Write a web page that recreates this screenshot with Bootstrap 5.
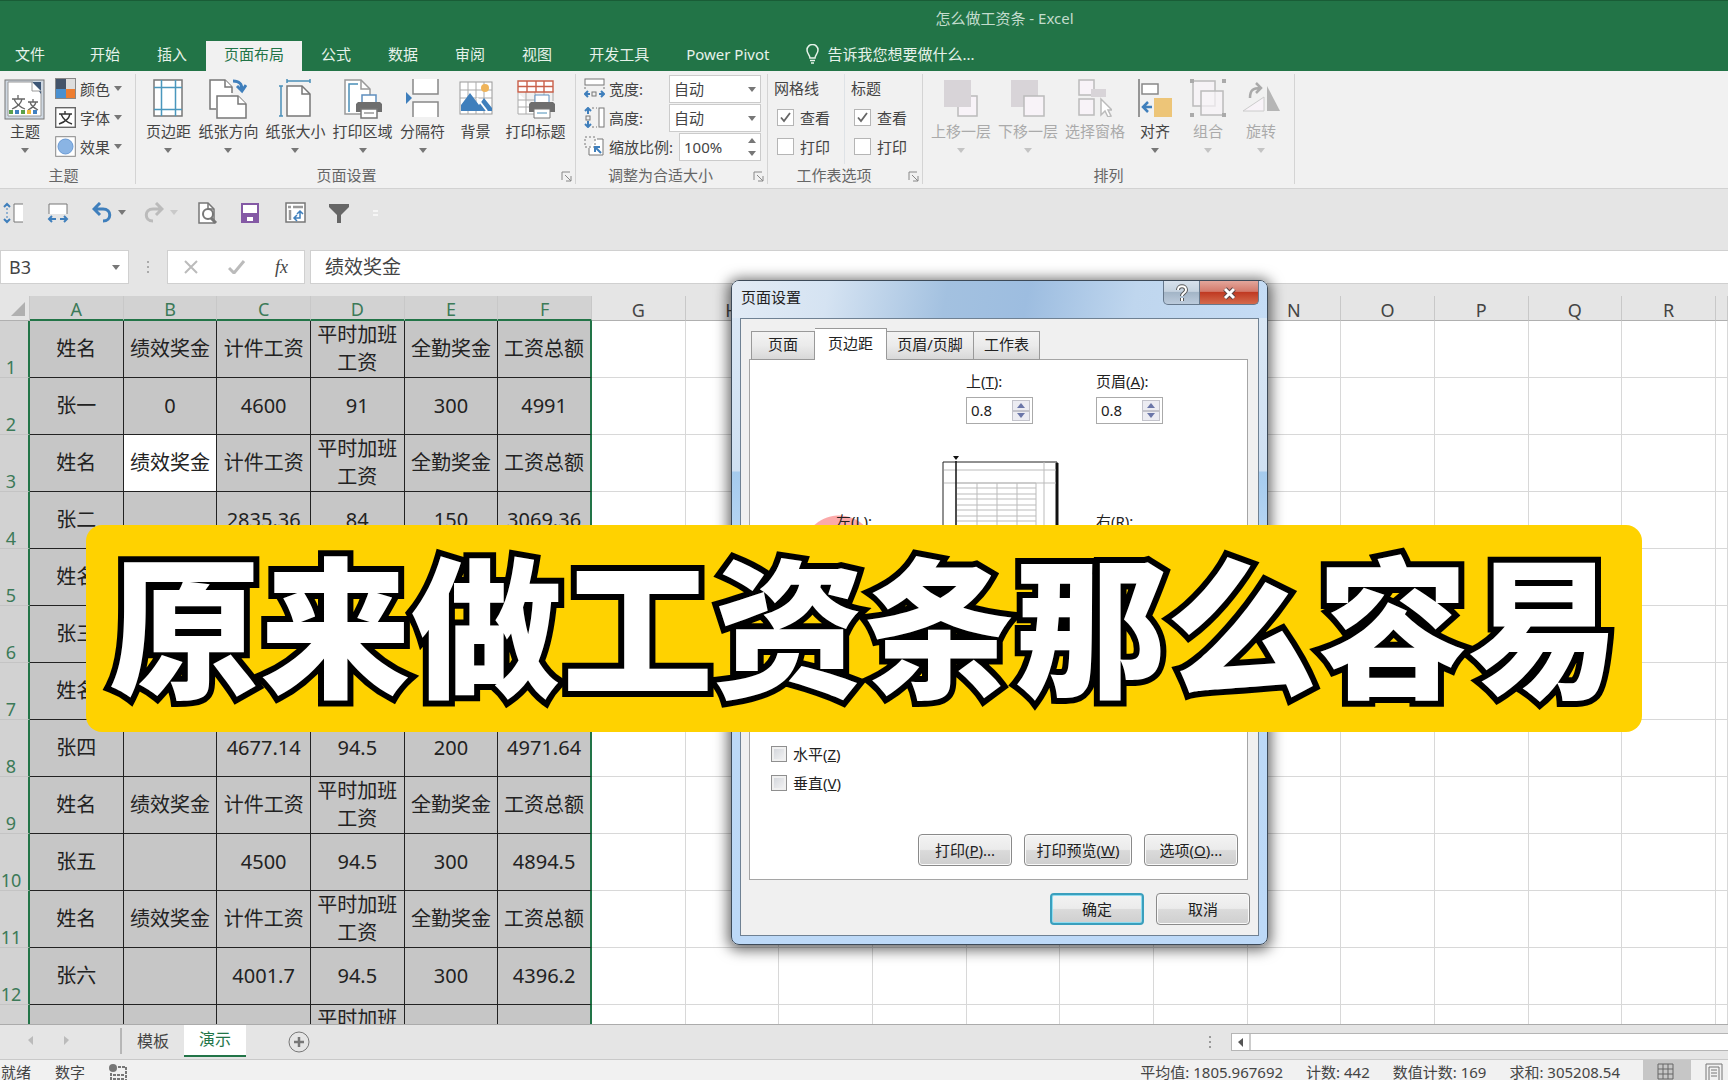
<!DOCTYPE html>
<html lang="zh-CN">
<head>
<meta charset="utf-8">
<meta name="viewport" content="width=device-width, initial-scale=1">
<title>怎么做工资条 - Excel</title>
<link rel="stylesheet" href="https://cdn.jsdelivr.net/npm/bootstrap@5.3.0/dist/css/bootstrap.min.css">
<style>
:root{--xl:#227447;--ui:"Noto Sans","Noto Sans CJK SC",sans-serif}
body{font-family:var(--ui);font-size:15px;line-height:20px;color:#444;background:#e5e5e5;overflow:hidden}
button,input,select{font:inherit;color:inherit}
button{border:0;background:none;padding:0;white-space:nowrap}
svg{display:block;flex:none}
.titlebar{background:var(--xl);color:#c3dccd;height:71px;border-top:1px solid #195c36}
.titletext{height:40px;padding:7px 0 0 281px}
.tabs{gap:1px}
.tabs button{height:30px;padding:0 18px 4px;color:#e6f2ea}
.tabs button.first{padding:0 26px 4px 15px}
.tabs button.on{background:#f1f1f1;color:var(--xl)}
.ribbon{background:#f1f1f1;height:118px;border-bottom:1px solid #d2d2d2}
.group{border-right:1px solid #d4d4d4;margin:3px 0 4px}
.glabel{color:#666;height:20px;text-align:center;line-height:22px}
.glabel svg{margin:7px 2px 0 0}
.big{min-width:46px;height:84px;padding-top:5px}
.big span{margin-top:4px;height:20px}
.big span.tight{margin-top:2px}
.big i,.dd{width:0;height:0;border:4px solid transparent;border-top:5px solid #777;border-bottom:0;flex:none}
.big i{margin-top:7px}
.big.off{color:#aaa}.big.off i{border-top-color:#c4c4c4}
.small-row{height:29px}
.fit select,.fit input{height:28px;border:1px solid #cbcbcb;background:#fff;border-radius:0;padding:0 4px;outline:0;appearance:none;min-width:0;width:100%}
.fit label{flex:1;white-space:nowrap;min-width:0}
.pickwrap{position:relative;width:92px;flex:none}
.pickwrap.narrow{width:82px}
.pickwrap .dd{position:absolute;right:5px;top:12px}
.spin{position:absolute;right:5px;top:5px;height:18px}
.up{width:0;height:0;border:4px solid transparent;border-bottom:5px solid #777;border-top:0}
.tick{appearance:none;width:17px;height:17px;border:1px solid #b5b5b5;background:#fff;margin:0 6px 0 3px;flex:none}
.tick:checked{background:#fff url("data:image/svg+xml,%3Csvg xmlns='http://www.w3.org/2000/svg' viewBox='0 0 15 15'%3E%3Cpath d='M3 7.500l3 3.500 6-8' fill='none' stroke='%23666' stroke-width='1.800'/%3E%3C/svg%3E")}
.optcol{width:77px}
.quick{height:61px;padding:0 2px 14px}
.quick>button+button{margin-left:23px}
.fbar{height:34px}
.fbar .cellbox{background:#fff;border:1px solid #d0d0d0}
.fbar input{border:0;outline:0;background:none;min-width:0;width:100%;font-size:19px;color:#444}
.fbar .namebox input{font-size:18px;padding:0 8px}
.sheet{margin-top:12px;overflow:hidden;background:#fff;min-height:0}
.sheet table{table-layout:fixed;width:100%;border-collapse:separate;border-spacing:0}
.sheet col.rowno{width:30px}.sheet col.std{width:calc((100vw - 42px)/18)}
.sheet thead th{height:24px;background:#e5e5e5;border-right:1px solid #c8c8c8;border-bottom:1px solid #b0b0b0;font-size:18px;line-height:20px;font-weight:400;text-align:center;padding:3px 0 0;color:#444}
.sheet thead th.sel{background:#d2d2d2;color:#3c7a58;border-bottom:2px solid var(--xl)}
.sheet tbody th{height:57px;background:#d2d2d2;border-right:2px solid var(--xl);border-bottom:1px solid #c4c4c4;font-size:18px;line-height:20px;font-weight:400;color:#3c7a58;vertical-align:bottom;padding:0 6px 0 0;text-align:center}
.sheet td{height:57px;border-right:1px solid #d8d8d8;border-bottom:1px solid #d8d8d8;padding:0;text-align:center;vertical-align:middle;font-size:20px;line-height:28px;color:#222;white-space:nowrap}
.sheet td.pay{background:#c6c6c6;border-right:1px solid #222;border-bottom:1px solid #222}
.sheet td.edge{border-right:2px solid var(--xl)}
.sheet td.cur{background:#fff}
.sheetbar{height:36px;border-top:1px solid #ababab;border-bottom:1px solid #c9c9c9;font-size:16px}
.sheetbar button{padding-bottom:3px}
.sheetbar .on{background:#fff;color:var(--xl);border-bottom:2px solid var(--xl);height:32px;width:62px}
.scrollh{height:18px;border:1px solid #b5b5b5;border-right:0;background:#fff;flex:0 0 497px}
.status{height:20px;background:#f1f1f1;overflow:hidden;padding-left:1px}
.status span{margin-top:2px}
.status .seg{width:48px;height:20px;background:#c6c6c6}
.dlg{position:absolute;left:731px;top:280px;width:537px;height:665px;border:1px solid #3d4a58;border-radius:8px;background:linear-gradient(#dbe8f5 0,#cfe0f2 190px,#a5cbee 191px,#bbd8f5 270px,#bdd9f7);box-shadow:0 2px 14px 3px rgba(0,0,0,.6);padding:0 8px 8px;color:#222}
.dlghead{height:37px;margin:0 -8px;padding:0 8px;border-radius:7px 7px 0 0;background:linear-gradient(100deg,#e2ebf5 0,#d5e3f2 18%,#a3c1e0 40%,#9dbde0 55%,#bfd6ee 75%,#c5dcf5)}
.dlghead span{padding:6px 0 0 1px}
.winbtn{height:24px;border:1px solid #66788c;border-top:0;width:37px;background:linear-gradient(#d7e1ec 0,#c5d2df 45%,#a3b5c7 50%,#bccbdc);border-radius:0 0 0 5px}
.winbtn.close{width:59px;border-radius:0 0 5px 0;border-left:0;background:linear-gradient(#e3a69b 0,#d37a6b 45%,#c03a22 50%,#d46a4c)}
.dlgbody{background:#f0f0f0;border:1px solid #6f8193;padding:9px 10px 0 8px}
.ptabs{height:32px;padding-left:2px;margin-bottom:-1px;position:relative}
.ptabs button{height:29px;border:1px solid #999;border-left-width:0;background:linear-gradient(#f3f3f3,#ebebeb 50%,#d8d8d8);padding-bottom:3px}
.ptabs button:first-child{border-left-width:1px;width:64px}
.ptabs button.on{height:32px;background:#fff;border-bottom-color:#fff;width:72px}
.panel{background:#fff;border:1px solid #a5a5a5;height:521px}
.mgrid{display:grid;grid-template-columns:86px 106px 154px 1fr;padding-top:11px;line-height:20px}
.num{position:relative;width:67px;height:27px;margin-top:6px;border:1px solid #aaa;background:#fff}
.num input{width:44px;height:23px;border:0;outline:0;padding:0 4px;color:#222;display:block}
.num div{position:absolute;right:2px;top:2px;width:18px;height:21px}
.num div b{flex:1;border:1px solid #c3c3cb;background:#ececf2;display:flex;align-items:center;justify-content:center}
.num .up{border-bottom-color:#6b76a8}.num .dd{border-top-color:#6b76a8}
.preview{margin-top:32px}
.halo{background:radial-gradient(circle at 33px 41px,#fba9a9 0 36px,transparent 37px);margin:87px 0 0 -30px;padding-left:30px;height:80px;width:74px;white-space:nowrap}
.tick.sys{border:1px solid #8f8f8f;background:linear-gradient(135deg,#cfd2d8,#f6f6f6);box-shadow:inset 0 0 0 2px #f0f0f0;width:16px;height:16px;margin:0 6px 0 0}
.sysbtn{height:32px;width:94px;border:1px solid #8a8a8a;border-radius:4px;background:linear-gradient(#f3f3f3 0,#ebebeb 48%,#dadada 52%,#cfcfcf);box-shadow:inset 0 0 0 1px #fafafa}
.sysbtn.wide{width:108px}
.sysbtn.ok{border:2px solid #3a9fbd;box-shadow:inset 0 0 0 1px #8fdcf0}
.banner{position:absolute;left:5%;right:5%;top:525px;height:207px;background:#ffd200;border-radius:16px;margin:0;padding-bottom:16px;display:flex;align-items:center;justify-content:center;font:900 151px/191px "Noto Sans CJK SC",sans-serif;color:#fff;-webkit-text-stroke:12px #000;paint-order:stroke fill;stroke-linejoin:round;white-space:nowrap}
</style>
<script src="https://cdn.jsdelivr.net/npm/bootstrap@5.3.0/dist/js/bootstrap.bundle.min.js"></script>
</head>
<body class="vh-100 d-flex flex-column position-relative">
<header class="titlebar flex-shrink-0">
  <div class="titletext text-center">怎么做工资条 - Excel</div>
  <nav class="tabs d-flex">
    <button class="first">文件</button><button>开始</button><button>插入</button><button class="on">页面布局</button><button>公式</button><button>数据</button><button>审阅</button><button>视图</button><button>开发工具</button><button>Power Pivot</button>
    <button class="d-flex align-items-center gap-2"><svg width="13" height="20" viewBox="0 0 13 20" fill="none" stroke="#e6f2ea" stroke-width="1.500"><path d="M4 14c0-3-3-4-3-8a5.500 5.500 0 0 1 11 0c0 4-3 5-3 8zM4 16.500h5M5 19h3"/></svg>告诉我您想要做什么...</button>
  </nav>
</header>

<section class="ribbon d-flex flex-shrink-0">
  <div class="group d-flex flex-column" style="width:136px">
    <div class="d-flex flex-grow-1">
      <button class="big d-flex flex-column align-items-center" style="margin-left:2px"><svg width="42" height="42" viewBox="0 0 42 42"><rect x="1" y="1" width="39" height="39" fill="#cfd8e2" stroke="#777"/><path d="M4 3h25l8 9v25H4z" fill="#fff" stroke="#999"/><path d="M28 3h9v12z" fill="#3d5676"/><path d="M28 3v9h9" fill="#fff" stroke="#999"/><path d="M8 20h13M14 16v4M18 20c-1 5-5 8-10 10M10 20c2 5 6 8 11 10M24 23h10M29 20v3M32 23c-1 4-4 6-8 8M26 23c1 4 4 6 8 8" stroke="#666" fill="none" stroke-width="1.300"/><path d="M5 33h4M17 33h4" stroke="#5aa04a" stroke-width="4"/><path d="M11 33h4M29 33h4" stroke="#4080c0" stroke-width="4"/><path d="M23 33h4" stroke="#efb93b" stroke-width="4"/></svg><span class="mt-0">主题</span><i></i></button>
      <div class="d-flex flex-column" style="margin-left:7px">
        <button class="small-row d-flex align-items-center gap-1"><svg width="21" height="21"><path fill="#44546a" d="M1 1h10v10H1z"/><path fill="#ddd" d="M11 1h9v10h-9z"/><path fill="#4a90d0" d="M1 11h10v9H1z"/><path fill="#ed7d31" d="M11 11h9v9h-9z"/><rect x=".5" y=".5" width="20" height="20" fill="none" stroke="#888"/></svg>颜色<i class="dd"></i></button>
        <button class="small-row d-flex align-items-center gap-1"><svg width="21" height="21" fill="none" stroke="#333" stroke-width="1.400"><rect x=".7" y=".7" width="19.600" height="19.600" fill="#fff" stroke="#666"/><path d="M4 7h13M10 4v3M15 7c-1 5-5 8-11 10M6 7c2 5 5 8 11 10"/></svg>字体<i class="dd"></i></button>
        <button class="small-row d-flex align-items-center gap-1"><svg width="21" height="21"><rect x=".7" y=".7" width="19.600" height="19.600" fill="#fff" stroke="#888"/><circle cx="10.500" cy="10.500" r="7.500" fill="#8ab4e4" stroke="#6a9ad4"/></svg>效果<i class="dd"></i></button>
      </div>
    </div>
    <div class="glabel pe-2">主题</div>
  </div>

  <div class="group d-flex flex-column" style="width:440px">
    <div class="d-flex flex-grow-1 justify-content-center" style="gap:7px">
      <button class="big d-flex flex-column align-items-center"><svg width="30" height="38" fill="none"><rect x="1" y="1" width="28" height="36" fill="#fff" stroke="#777" stroke-width="1.500"/><path d="M8.500 1v36M22.500 1v36M1 8.500h28M1 30.500h28" stroke="#4a97bd" stroke-width="1.500"/></svg><span>页边距</span><i></i></button>
      <button class="big d-flex flex-column align-items-center"><svg width="38" height="40" viewBox="0 0 38 40" fill="#fff" stroke="#777" stroke-width="1.500"><path d="M7 30H1V1h15l7 7v6"/><path d="M16 1v7h7M8 17h21l8 8v14H8z"/><path d="M29 17v8h8"/><path d="M24 2c7 0 9 3 9 9M28 7l5 5 4-6" stroke="#3f7fbc" stroke-width="3" fill="none"/></svg><span class="tight">纸张方向</span><i></i></button>
      <button class="big d-flex flex-column align-items-center"><svg width="32" height="38" viewBox="0 0 32 38" fill="none" stroke-width="1.500"><path d="M8 7h15l8 8v22H8z" fill="#fff" stroke="#777"/><path d="M23 7v8h8" stroke="#777"/><path d="M8 2h23M8 0v4M31 0v4M2 7v30M0 7h4M0 37h4" stroke="#4a8fb8"/></svg><span>纸张大小</span><i></i></button>
      <button class="big d-flex flex-column align-items-center"><svg width="38" height="40" viewBox="0 0 38 40" fill="none" stroke-width="1.500"><path d="M1 1h16l9 9v25H1z" fill="#fff" stroke="#999"/><path d="M5 33V5h9" stroke="#4a8fb8"/><path d="M17 1v9h9" stroke="#999"/><path d="M18 24v-8h14v8" fill="#fff" stroke="#5f8fbf"/><path d="M14 23h22l2 2v8H12v-8z" fill="#6e6e6e"/><path d="M17 30h16v9H17z" fill="#fff" stroke="#777"/><path d="M20 34h10" stroke="#999"/></svg><span class="tight">打印区域</span><i></i></button>
      <button class="big d-flex flex-column align-items-center"><svg width="34" height="38" viewBox="0 0 34 38"><path d="M7 0v15h25V0M7 38V23h25v15" fill="#fff" stroke="#888" stroke-width="1.500"/><path d="M0 13l6 6-6 6z" fill="#3f7fbc"/></svg><span>分隔符</span><i></i></button>
      <button class="big d-flex flex-column align-items-center"><svg width="34" height="38" viewBox="0 0 34 38"><rect x="1" y="3" width="32" height="32" fill="#fff" stroke="#999"/><path d="M9 3v32M17 3v32M25 3v32M1 11h32M1 19h32" stroke="#aaa"/><circle cx="26" cy="9" r="4" fill="#efb45a"/><path d="M2 32V26l9-12 9 12 5-7 8 10v3z" fill="#3f7fbc"/><path d="M18 19l10 13" stroke="#fff" stroke-width="2"/></svg><span>背景</span></button>
      <button class="big d-flex flex-column align-items-center"><svg width="38" height="40" viewBox="0 0 38 40"><path d="M1 14v21h24M1 21h22M1 28h18M9 12v23M18 12v23M27 12v10M36 12v10" fill="#fff" stroke="#aaa"/><path d="M1 2h35v11H1zM1 7.500h35M10 2v11M19 2v11M27 2v11" fill="#fff" stroke="#c9604a" stroke-width="1.400"/><path d="M18 24v-8h14v8" fill="#fff" stroke="#5f8fbf"/><path d="M14 23h22l2 2v8H12v-8z" fill="#6e6e6e"/><path d="M17 30h16v9H17z" fill="#fff" stroke="#777"/><path d="M20 34h10" stroke="#4a8fb8"/></svg><span class="tight">打印标题</span></button>
    </div>
    <div class="glabel d-flex"><span class="flex-grow-1 pe-1">页面设置</span><svg width="12" height="12" fill="none" stroke="#888"><path d="M1 9V1h8M4 4l6 6M10 5v5H5"/></svg></div>
  </div>

  <div class="group d-flex flex-column" style="width:192px">
    <div class="fit flex-grow-1 ps-2" style="padding-right:6px">
      <div class="small-row d-flex align-items-center"><svg width="21" height="21" fill="none" stroke="#777" class="me-1"><rect x="1" y="1" width="19" height="6" fill="#fff"/><path d="M1 9v4M20 9v4" stroke-dasharray="2"/><rect x="8" y="14" width="4" height="4"/><path d="M6 16H1m3-3l-3 3 3 3M15 16h5m-3-3l3 3-3 3" stroke="#3f7fbc" stroke-width="2"/></svg><label for="w">宽度:</label><div class="pickwrap"><select id="w"><option>自动</option></select><i class="dd"></i></div></div>
      <div class="small-row d-flex align-items-center"><svg width="21" height="21" fill="none" stroke="#777" class="me-1"><rect x="15" y="1" width="5" height="19" fill="#fff"/><path d="M8 1h5M8 20h5" stroke-dasharray="2"/><rect x="2" y="9" width="4" height="4"/><path d="M4 7V1M1 4l3-3 3 3M4 14v6m-3-3l3 3 3-3" stroke="#3f7fbc" stroke-width="2"/></svg><label for="h">高度:</label><div class="pickwrap"><select id="h"><option>自动</option></select><i class="dd"></i></div></div>
      <div class="small-row d-flex align-items-center"><svg width="21" height="21" fill="none" stroke="#777" class="me-1"><path d="M5 12v7h14V3h-6" fill="#fff"/><rect x="1" y="1" width="10" height="10" stroke-dasharray="2"/><path d="M17 17l-6-6M11 16v-5h5" stroke="#3f7fbc" stroke-width="2"/></svg><label for="z">缩放比例:</label><div class="pickwrap narrow"><input id="z" value="100%"><span class="spin d-flex flex-column justify-content-between"><i class="up"></i><i class="dd position-static"></i></span></div></div>
    </div>
    <div class="glabel d-flex"><span class="flex-grow-1 pe-2">调整为合适大小</span><svg width="12" height="12" fill="none" stroke="#888"><path d="M1 9V1h8M4 4l6 6M10 5v5H5"/></svg></div>
  </div>

  <div class="group d-flex flex-column" style="width:155px">
    <div class="d-flex flex-grow-1">
      <div class="optcol border-end me-1" style="padding-left:6px">
        <div class="small-row pt-1">网格线</div>
        <label class="small-row d-flex align-items-center"><input class="tick" type="checkbox" checked>查看</label>
        <label class="small-row d-flex align-items-center"><input class="tick" type="checkbox">打印</label>
      </div>
      <div class="optcol ps-0" style="margin-left:2px;width:69px">
        <div class="small-row pt-1">标题</div>
        <label class="small-row d-flex align-items-center"><input class="tick" type="checkbox" checked>查看</label>
        <label class="small-row d-flex align-items-center"><input class="tick" type="checkbox">打印</label>
      </div>
    </div>
    <div class="glabel d-flex"><span class="flex-grow-1 pe-2">工作表选项</span><svg width="12" height="12" fill="none" stroke="#888"><path d="M1 9V1h8M4 4l6 6M10 5v5H5"/></svg></div>
  </div>

  <div class="group d-flex flex-column" style="width:372px">
    <div class="d-flex flex-grow-1 ps-2" style="gap:7px">
      <button class="big off d-flex flex-column align-items-center" disabled><svg width="34" height="38"><rect x="14" y="17" width="19" height="20" fill="#f8f3f8" stroke="#bbb" stroke-width="1.500"/><path d="M0 1h27v27H0z" fill="#d8d4d8"/></svg><span>上移一层</span><i></i></button>
      <button class="big off d-flex flex-column align-items-center" disabled><svg width="34" height="38"><path d="M0 1h27v27H0z" fill="#d8d4d8"/><rect x="13" y="17" width="20" height="20" fill="#f8f3f8" stroke="#bbb" stroke-width="1.500"/></svg><span>下移一层</span><i></i></button>
      <button class="big off d-flex flex-column align-items-center" disabled><svg width="34" height="38" stroke="#bbb" stroke-width="1.500" fill="#f8f3f8"><rect x="1" y="1" width="15" height="15"/><rect x="1" y="20" width="15" height="16"/><path d="M13 10h15v8H13z" fill="#d8d4d8" stroke="none"/><path d="M23 20v16l4-4 3 6 3-1-3-6h4z" fill="#fff"/></svg><span>选择窗格</span></button>
      <button class="big d-flex flex-column align-items-center"><svg width="34" height="38"><path d="M1 0v38" stroke="#777" stroke-width="1.500"/><rect x="4" y="5" width="16" height="10" fill="#fff" stroke="#888" stroke-width="1.500"/><path d="M16 19h18v19H16z" fill="#edc578"/><path d="M14 28H5m5-5l-5 5 5 5" stroke="#3f7fbc" stroke-width="2.500" fill="none"/></svg><span>对齐</span><i></i></button>
      <button class="big off d-flex flex-column align-items-center" disabled><svg width="36" height="38" fill="#f8f3f8" fill-opacity=".7" stroke="#bbb" stroke-width="1.500"><rect x="3" y="2" width="22" height="25"/><rect x="11" y="12" width="22" height="24"/><path d="M0 2h4M32 2h4M0 36h4M32 36h4" stroke="#aaa" stroke-width="4"/></svg><span>组合</span><i></i></button>
      <button class="big off d-flex flex-column align-items-center" disabled><svg width="38" height="38"><path d="M1 32h21V18z" fill="#f8f3f8" stroke="#ccc"/><path d="M25 7v25h13z" fill="#b5b5b5"/><path d="M8 19c0-8 3-10 11-10M14 4l5 5-5 5" stroke="#aaa" stroke-width="2.500" fill="none"/></svg><span>旋转</span><i></i></button>
    </div>
    <div class="glabel">排列</div>
  </div>
</section>

<div class="quick d-flex align-items-center flex-shrink-0">
  <button aria-label="行高"><svg width="22" height="22" fill="none"><path d="M21 2h-9v18h9" fill="#fff" stroke="#777"/><path d="M5 2v18" stroke="#3f7fbc" stroke-dasharray="2"/><path d="M2 5l3-3 3 3M2 17l3 3 3-3" stroke="#3f7fbc" stroke-width="2"/></svg></button>
  <button aria-label="列宽"><svg width="22" height="22" fill="none"><path d="M2 12V2h18v10" fill="#fff" stroke="#777"/><path d="M2 17h7M13 17h7M5 14l-3 3 3 3M17 14l3 3-3 3" stroke="#3f7fbc" stroke-width="2"/></svg></button>
  <button aria-label="撤消" class="d-flex align-items-center" style="gap:6px"><svg width="20" height="22" fill="none" stroke="#3f7fbc" stroke-width="3"><path d="M2 7h9c9 0 9 12 0 12M8 1L2 7l6 6"/></svg><i class="dd"></i></button>
  <button aria-label="恢复" class="d-flex align-items-center" style="gap:6px;margin-left:18px"><svg width="20" height="22" fill="none" stroke="#bbb" stroke-width="3"><path d="M18 7H9c-9 0-9 12 0 12M12 1l6 6-6 6"/></svg><i class="dd opacity-25"></i></button>
  <button aria-label="打印预览" style="margin-left:20px"><svg width="20" height="22" fill="none" stroke="#777" stroke-width="1.500"><path d="M1 21V1h9l6 6v14z" fill="#fff"/><path d="M10 1v6h6"/><circle cx="10" cy="12" r="5" fill="#fff" stroke-width="2"/><path d="M13 16l5 5" stroke-width="3"/></svg></button>
  <button aria-label="保存"><svg width="19" height="20" fill="none" stroke="#8459a5" stroke-width="2"><path d="M1 1h16v18H1z" fill="#fff"/><path d="M1 11h16M5 19v-6h8v6"/><path d="M1 12h3v6H1zM14 12h3v6h-3z" fill="#8459a5"/></svg></button>
  <button aria-label="数据透视表" style="margin-left:25px"><svg width="21" height="22" fill="none" stroke="#777" stroke-width="1.500"><rect x="1" y="1" width="19" height="19" fill="#fff"/><path d="M3 5h3M8 5h10M5 8v10" stroke-width="2.500" stroke="#999"/><path d="M9 16h6V9M12 12l3-3 3 3M12 13l-3 3 3 3" stroke="#3f7fbc"/></svg></button>
  <button aria-label="筛选"><svg width="20" height="20"><path d="M0 1h20v3l-8 8v8H8v-8L0 4z" fill="#666"/></svg></button>
  <svg width="6" height="12" class="ms-4"><path d="M0 4h5M0 8h5" stroke="#f6f6f6" stroke-width="2"/></svg>
</div>

<div class="fbar d-flex flex-shrink-0">
  <div class="cellbox namebox d-flex align-items-center pe-2" style="width:129px"><input aria-label="名称框" value="B3"><i class="dd"></i></div>
  <svg width="38" height="34"><path d="M19 11v14" stroke="#aaa" stroke-width="2" stroke-dasharray="2 3"/></svg>
  <div class="cellbox d-flex align-items-center justify-content-between px-3" style="width:138px">
    <svg width="14" height="14" stroke="#bbb" stroke-width="2"><path d="M1 1l12 12M13 1L1 13"/></svg><svg width="18" height="14" stroke="#bbb" stroke-width="3" fill="none"><path d="M1 8l5 5L16 1"/></svg><span style="font:italic 18px/20px 'Liberation Serif',serif">fx</span>
  </div>
  <div class="cellbox flex-grow-1 d-flex" style="margin-left:5px;border-right:0;padding-left:14px"><input aria-label="编辑栏" value="绩效奖金" class="p-0"></div>
</div>

<main class="sheet flex-grow-1"><table><colgroup id="cols"><col class="rowno"></colgroup><thead><tr id="heads"><th class="p-0"><svg width="28" height="22"><path d="M25 5v14H11z" fill="#b0b0b0"/></svg></th></tr></thead><tbody id="cells"></tbody></table></main>

<footer class="flex-shrink-0">
  <div class="sheetbar d-flex align-items-center">
    <svg width="122" height="36"><path d="M33 12v9l-5-5zM64 12v9l5-5z" fill="#bbb"/><path d="M121 4v26" stroke="#888"/></svg>
    <button style="width:62px">模板</button><button class="on align-self-start">演示</button>
    <button aria-label="新工作表" class="p-0" style="margin-left:42px"><svg width="22" height="22" fill="none" stroke="#777"><circle cx="11" cy="11" r="10"/><path d="M11 6v10M6 11h10" stroke-width="2.500"/></svg></button>
    <svg width="10" height="18" class="ms-auto me-3"><path d="M5 3v14" stroke="#999" stroke-width="2" stroke-dasharray="2 3"/></svg>
    <div class="scrollh"><svg width="19" height="16"><path d="M11 4v9L6 8z" fill="#555"/><path d="M18 0v16" stroke="#999"/></svg></div>
  </div>
  <div class="status d-flex">
    <span>就绪</span><span class="ms-4">数字</span><svg width="18" height="19" class="mt-1 ms-4"><circle cx="4" cy="4" r="4" fill="#777"/><path d="M9 3h8v16M2 9v10M4 11h11M4 15h11" stroke="#777" fill="none" stroke-width="2" stroke-dasharray="3 1"/></svg>
    <div class="ms-auto d-flex" style="gap:23px"><span>平均值: 1805.967692</span><span>计数: 442</span><span>数值计数: 169</span><span>求和: 305208.54</span></div>
    <div class="seg" style="margin-left:23px"><svg width="48" height="20" fill="none" stroke="#666"><path d="M15 4h15v15H15zM20 4v15M25 4v15M15 9h15M15 14h15"/></svg></div>
    <svg width="37" height="20" fill="none" stroke="#777"><path d="M15 4h16v16M15 4v16M18 20V7h10v13M20 10h6M20 13h6M20 16h6"/></svg>
  </div>
</footer>

<section class="dlg d-flex flex-column" role="dialog" aria-label="页面设置">
  <div class="dlghead d-flex flex-shrink-0"><span class="flex-grow-1">页面设置</span>
    <button class="winbtn" aria-label="帮助"><svg width="35" height="22" fill="none"><path d="M14 8c0-5 8-5 8 0 0 3-4 3-4 6M18 16v3" stroke="#555" stroke-width="4"/><path d="M14 8c0-5 8-5 8 0 0 3-4 3-4 6M18 16v3" stroke="#fff" stroke-width="2"/></svg></button>
    <button class="winbtn close" aria-label="关闭"><svg width="58" height="22"><path d="M25 7l9 9M34 7l-9 9" stroke="#5b4444" stroke-width="5"/><path d="M25 7l9 9M34 7l-9 9" stroke="#fff" stroke-width="3"/></svg></button>
  </div>
  <div class="dlgbody flex-grow-1">
    <div class="ptabs d-flex align-items-end"><button>页面</button><button class="on">页边距</button><button style="width:87px">页眉/页脚</button><button style="width:66px">工作表</button></div>
    <div class="panel d-flex flex-column">
      <div class="mgrid">
        <div></div><div></div>
        <div class="ps-4"><label for="t">上(<u>T</u>):</label><div class="num"><input id="t" value="0.8"><div class="d-flex flex-column"><b><i class="up"></i></b><b><i class="dd"></i></b></div></div></div>
        <div><label for="a">页眉(<u>A</u>):</label><div class="num"><input id="a" value="0.8"><div class="d-flex flex-column"><b><i class="up"></i></b><b><i class="dd"></i></b></div></div></div>
        <div></div>
        <div><div class="halo">左(<u>L</u>):</div></div>
        <svg class="preview" width="118" height="160" fill="none" stroke="#bbb"><path d="M1 6h114v150H1z" fill="#fff" stroke="#222"/><path d="M115 7v150" stroke="#111" stroke-width="3"/><path d="M2 14h112M2 27h112M102 6v150M15 27h79v128M35 27v128M55 27v128M75 27v128M15 32h79M15 38h79M15 43h79M15 49h79M15 54h79M15 60h79M15 65h79M15 71h79M15 76h79M15 82h79M15 87h79M15 93h79"/><path d="M14 5v150" stroke="#111" stroke-width="1.500"/><path d="M11 0h6l-3 4z" fill="#111" stroke="none"/></svg>
        <div style="padding-top:87px">右(<u>R</u>):</div>
      </div>
      <div class="mt-auto" style="padding-left:21px">
        <label class="small-row d-flex align-items-center"><input type="checkbox" class="tick sys">水平(<u>Z</u>)</label>
        <label class="small-row d-flex align-items-center"><input type="checkbox" class="tick sys">垂直(<u>V</u>)</label>
      </div>
      <div class="d-flex justify-content-end" style="gap:12px;padding:37px 9px 13px 0"><button class="sysbtn">打印(<u>P</u>)...</button><button class="sysbtn wide">打印预览(<u>W</u>)</button><button class="sysbtn">选项(<u>O</u>)...</button></div>
    </div>
    <div class="d-flex justify-content-end" style="gap:12px;margin:13px -2px 0 0"><button class="sysbtn ok">确定</button><button class="sysbtn">取消</button></div>
  </div>
</section>
<h1 class="banner">原来做工资条那么容易</h1>

<script>
const title = ['姓名','绩效奖金','计件工资','平时加班<br>工资','全勤奖金','工资总额'];
const rows = [title,['张一','0','4600','91','300','4991'],title,['张二','','2835.36','84','150','3069.36'],['姓名'],['张三'],['姓名'],['张四','','4677.14','94.5','200','4971.64'],title,['张五','','4500','94.5','300','4894.5'],title,['张六','','4001.7','94.5','300','4396.2'],['','','','平时加班<br>&nbsp;']];
const letters = [...'ABCDEFGHIJKLMNOPQR',''];
cols.insertAdjacentHTML('beforeend', letters.map(l => `<col${l ? ' class="std"' : ''}>`).join(''));
heads.insertAdjacentHTML('beforeend', letters.map((l,i) => `<th class="${i<6?'sel':''}">${l}</th>`).join(''));
cells.innerHTML = rows.map((r,n) => `<tr><th>${n<12?n+1:''}</th>` + letters.map((l,i) => i<6 ? `<td class="pay${i==5?' edge':''}${n==2&&i==1?' cur':''}">${r[i]||''}</td>` : '<td></td>').join('') + '</tr>').join('');
</script>
</body>
</html>
